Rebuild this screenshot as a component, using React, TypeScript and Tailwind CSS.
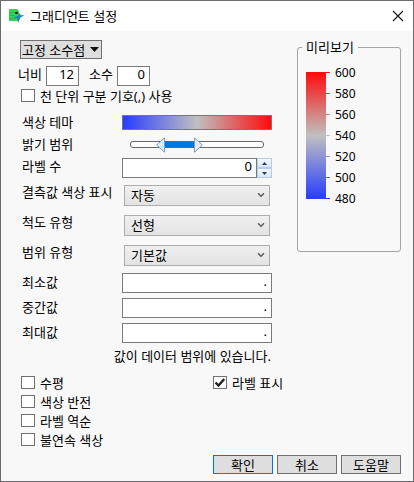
import { useState } from 'react'
import type { ReactNode } from 'react'
import { ChevronDown } from 'lucide-react'

const field =
  'h-5 border border-[#7a7a7a] bg-white pr-1 pb-1 text-right text-[13px] leading-4 outline-none rounded-none'

function Row({ label, id, height, children }: { label: string; id: string; height: string; children: ReactNode }) {
  return (
    <div className={`flex ${height}`}>
      <label htmlFor={id} className="w-[100px] shrink-0 whitespace-nowrap leading-[22px]">
        {label}
      </label>
      <div className="flex min-w-0 flex-1 items-start">{children}</div>
    </div>
  )
}

function SelectRow({ label, id, options }: { label: string; id: string; options: string[] }) {
  return (
    <Row label={label} id={id} height="h-[30px]">
      <div className="relative mx-0.5 mt-1 flex flex-1">
        <select
          id={id}
          className="h-[21px] w-full appearance-none border border-[#adadad] bg-linear-to-b from-[#f0f0f0] to-[#e3e3e3] pb-0.5 pl-1.5 text-[13px] leading-4 outline-none"
        >
          {options.map((option) => (
            <option key={option}>{option}</option>
          ))}
        </select>
        <ChevronDown className="pointer-events-none absolute top-[5px] right-1 size-2.5 text-[#606060]" strokeWidth={4} />
      </div>
    </Row>
  )
}

function ValueRow({ label, id }: { label: string; id: string }) {
  return (
    <Row label={label} id={id} height="h-[25px]">
      <input id={id} defaultValue="." className={`mt-0.5 w-full ${field}`} />
    </Row>
  )
}

function Check({ label, checked = false }: { label: string; checked?: boolean }) {
  const [on, setOn] = useState(checked)
  return (
    <label className="flex h-[19px] items-center gap-[5px]">
      <span className="relative flex">
        <input
          type="checkbox"
          checked={on}
          onChange={() => setOn(!on)}
          className="h-[13px] w-3.5 appearance-none border border-[#707070] bg-white"
        />
        {on && (
          <svg viewBox="0 0 14 13" className="pointer-events-none absolute inset-0 h-[13px] w-3.5">
            <path d="M2.5 6.5L5.5 9.5L11.3 3" fill="none" stroke="#222" strokeWidth="2.4" />
          </svg>
        )}
      </span>
      <span>{label}</span>
    </label>
  )
}

function BrightnessSlider() {
  const [low, setLow] = useState(25)
  const [high, setHigh] = useState(49)
  return (
    <div className="relative mx-2 mt-1 h-4 flex-1">
      <div className="absolute inset-x-0 top-1 h-[7px] rounded-[3px] border border-[#666] bg-white" />
      <div
        className="absolute top-[5px] h-[5px] bg-[#0078d7]"
        style={{ left: `${low}%`, right: `${100 - high}%` }}
      />
      <svg viewBox="0 0 9 16" className="absolute top-0 h-4 w-[9px] -translate-x-2" style={{ left: `${low}%` }}>
        <path d="M8.5 .8V15.2L.7 8Z" fill="#dfebf9" stroke="#7f9dc6" />
      </svg>
      <svg viewBox="0 0 9 16" className="absolute top-0 h-4 w-[9px] -translate-x-0.5" style={{ left: `${high}%` }}>
        <path d="M.5 .8V15.2L8.3 8Z" fill="#dfebf9" stroke="#7f9dc6" />
      </svg>
      <input
        id="brightness"
        type="range"
        value={low}
        onChange={(e) => setLow(Math.min(Number(e.target.value), high))}
        className="absolute inset-y-0 left-0 w-[37%] opacity-0"
        max={37}
      />
      <input
        type="range"
        aria-label="밝기 범위"
        value={high}
        min={37}
        onChange={(e) => setHigh(Math.max(Number(e.target.value), low))}
        className="absolute inset-y-0 right-0 w-[63%] opacity-0"
      />
    </div>
  )
}

function Spinner({ onStep }: { onStep: (step: number) => void }) {
  const button = 'flex h-2.5 w-[15px] items-center justify-center border border-[#b5cbe6] bg-linear-to-b from-[#f4f8fd] to-[#dbe7f5]'
  return (
    <div className="mt-[3px] flex shrink-0 flex-col">
      <button type="button" aria-label="+" className={button} onClick={() => onStep(1)}>
        <svg viewBox="0 0 5 3" className="h-[3px] w-[5px]"><path d="M0 3L2.5 0L5 3Z" fill="#1f3c6b" /></svg>
      </button>
      <button type="button" aria-label="-" className={button} onClick={() => onStep(-1)}>
        <svg viewBox="0 0 5 3" className="h-[3px] w-[5px]"><path d="M0 0L2.5 3L5 0Z" fill="#1f3c6b" /></svg>
      </button>
    </div>
  )
}

const ticks = [
  { value: 600, color: 'bg-[#ff1010]' },
  { value: 580, color: 'bg-[#e84848]' },
  { value: 560, color: 'bg-[#d68484]' },
  { value: 540, color: 'bg-[#c0c0c0]' },
  { value: 520, color: 'bg-[#8d96d6]' },
  { value: 500, color: 'bg-[#5a68ea]' },
  { value: 480, color: 'bg-[#2a3cff]' },
]

function Preview() {
  return (
    <fieldset className="relative mt-4 h-[205px] w-[104px] shrink-0 rounded-[3px] border border-[#a5a5a5]">
      <legend className="absolute -top-[11px] left-1 bg-[#f8f8f8] px-1 leading-5">미리보기</legend>
      <div className="flex pt-6 pl-2">
        <div className="h-[127px] w-5 bg-linear-to-b/srgb from-[#ff0a0a] via-[#c0c0c0] to-[#263cff]" />
        <div className="-mt-2.5">
          {ticks.map((tick) => (
            <div key={tick.value} className="flex h-[21px] items-center gap-[5px] text-[12px]">
              <span className={`h-px w-1 ${tick.color}`} />
              <span>{tick.value}</span>
            </div>
          ))}
        </div>
      </div>
    </fieldset>
  )
}

function AppIcon() {
  return (
    <svg viewBox="0 0 16 14" className="h-3.5 w-4">
      <path d="M0 0H8L10 2V12H0Z" fill="#3ad255" />
      <path d="M0 3.5H6M0 6.5H5M0 9.5H7" stroke="#1fa845" strokeWidth=".7" />
      <path d="M15.5 6L11.5 8.5L9 14L8.3 9.5L4.5 8L9 7L11 3.5L11.5 6.2Z" fill="#1c86c8" />
      <circle cx="7.5" cy="4" r="1.3" fill="#111" />
    </svg>
  )
}

export default function App() {
  const [count, setCount] = useState(0)
  const action = 'h-[19px] w-[60px] border bg-[#dedede] leading-4'

  return (
    <div className="border border-[#6c6a6e] bg-[#f8f8f8] font-['Noto_Sans','Noto_Sans_CJK_KR',sans-serif] text-[13px] leading-[18px] text-black">
      <header className="flex h-[30px] items-center bg-white px-2">
        <AppIcon />
        <h1 className="ml-[5px] flex-1">그래디언트 설정</h1>
        <button type="button" aria-label="닫기" className="mr-px flex">
          <svg viewBox="0 0 12 12" className="size-3">
            <path d="M1 1L11 11M11 1L1 11" stroke="#111" strokeWidth="1.1" />
          </svg>
        </button>
      </header>

      <main className="flex pr-3">
        <div className="mr-[25px] min-w-0 flex-1 pt-[9px]">
          <div className="flex flex-col pl-[17px]">
            <button type="button" className="ml-0.5 flex h-[19px] w-[82px] items-center justify-between border border-[#707070] bg-[#dedede] pr-0.5 pl-px leading-4">
              고정 소수점
              <svg viewBox="0 0 9 5" className="h-[5px] w-[9px]"><path d="M0 0H9L4.5 5Z" fill="#111" /></svg>
            </button>
            <div className="mt-[7px] flex h-5 items-start">
              <label htmlFor="width" className="w-7 leading-4">너비</label>
              <input id="width" defaultValue="12" className={`w-[33px] ${field}`} />
              <label htmlFor="decimals" className="ml-[10px] w-7 leading-4">소수</label>
              <input id="decimals" defaultValue="0" className={`w-[33px] ${field}`} />
            </div>
            <div className="ml-[3px]">
              <Check label="천 단위 구분 기호(,) 사용" />
            </div>
          </div>

          <div className="mt-[6px] pl-[21px]">
            <Row label="색상 테마" id="theme" height="h-[22px]">
              <button
                id="theme"
                type="button"
                className="mt-1 h-[15px] w-full border border-[#777] bg-linear-to-r/srgb from-[#263cff] via-[#c0c0c0] to-[#ff0a0a]"
              />
            </Row>
            <Row label="밝기 범위" id="brightness" height="h-[22px]">
              <BrightnessSlider />
            </Row>
            <Row label="라벨 수" id="count" height="h-[26px]">
              <input
                id="count"
                value={count}
                onChange={(e) => setCount(Number(e.target.value) || 0)}
                className={`mt-[3px] min-w-0 flex-1 ${field}`}
              />
              <Spinner onStep={(step) => setCount(Math.max(0, count + step))} />
            </Row>
            <SelectRow label="결측값 색상 표시" id="missing" options={['자동']} />
            <SelectRow label="척도 유형" id="scale" options={['선형']} />
            <SelectRow label="범위 유형" id="range" options={['기본값']} />
            <ValueRow label="최소값" id="min" />
            <ValueRow label="중간값" id="mid" />
            <ValueRow label="최대값" id="max" />
            <p className="pr-px text-right leading-5">값이 데이터 범위에 있습니다.</p>
          </div>
        </div>
        <Preview />
      </main>

      {/* Display options */}
      <div className="mt-[7px] flex pl-5">
        <div className="w-48">
          <Check label="수평" />
          <Check label="색상 반전" />
          <Check label="라벨 역순" />
          <Check label="불연속 색상" />
        </div>
        <div>
          <Check label="라벨 표시" checked />
        </div>
      </div>

      <footer className="mt-[6px] flex justify-end gap-1 pr-3 pb-[7px]">
        <button type="button" className={`${action} border-[#0078d7]`}>확인</button>
        <button type="button" className={`${action} border-[#707070]`}>취소</button>
        <button type="button" className={`${action} border-[#707070]`}>도움말</button>
      </footer>
    </div>
  )
}
